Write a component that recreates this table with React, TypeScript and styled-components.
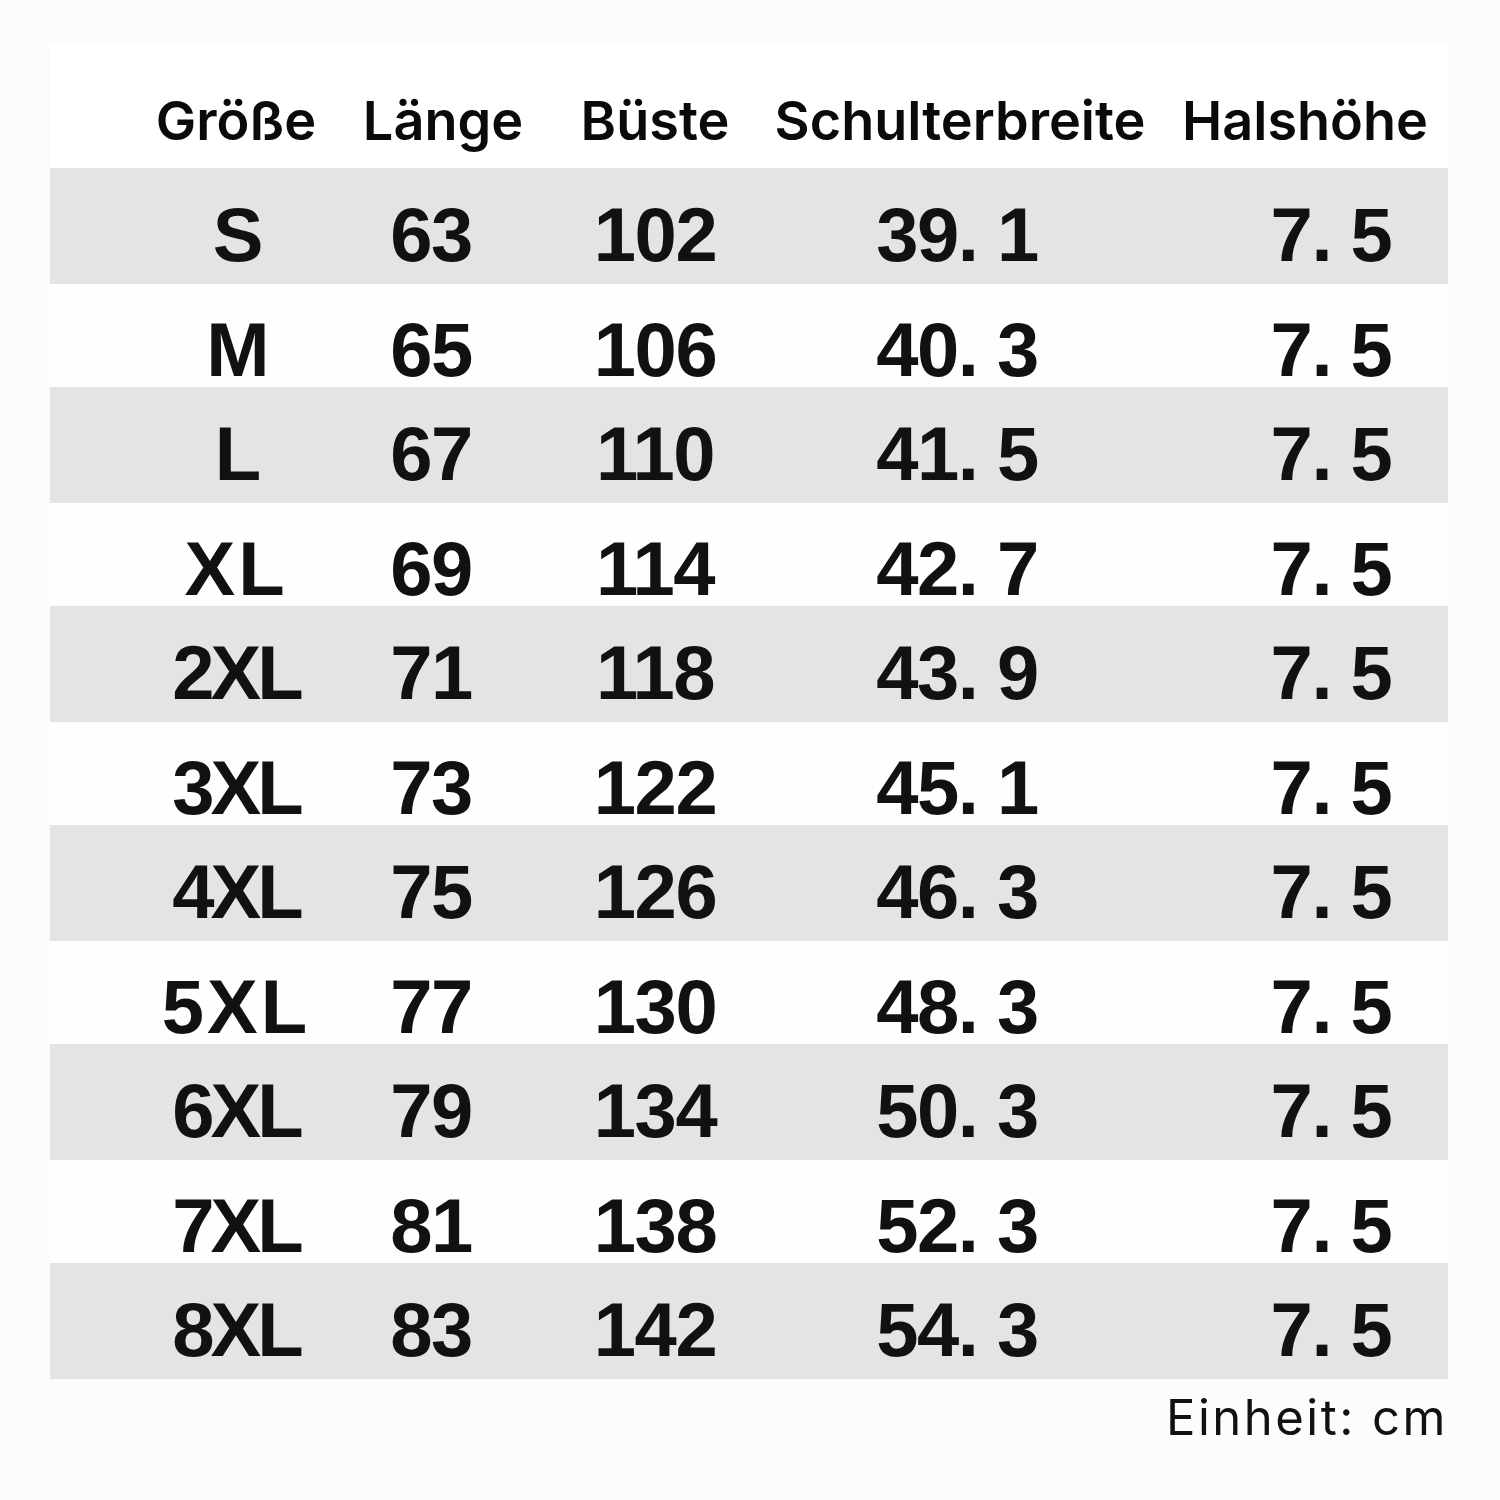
import React from "react"
import styled, { createGlobalStyle } from "styled-components"

const GlobalStyle = createGlobalStyle`
  html, body {
    margin: 0;
    padding: 0;
    background: #fcfcfc;
  }
`

const headers = ["Größe", "Länge", "Büste", "Schulterbreite", "Halshöhe"]

const rows: string[][] = [
  ["S", "63", "102", "39. 1", "7. 5"],
  ["M", "65", "106", "40. 3", "7. 5"],
  ["L", "67", "110", "41. 5", "7. 5"],
  ["XL", "69", "114", "42. 7", "7. 5"],
  ["2XL", "71", "118", "43. 9", "7. 5"],
  ["3XL", "73", "122", "45. 1", "7. 5"],
  ["4XL", "75", "126", "46. 3", "7. 5"],
  ["5XL", "77", "130", "48. 3", "7. 5"],
  ["6XL", "79", "134", "50. 3", "7. 5"],
  ["7XL", "81", "138", "52. 3", "7. 5"],
  ["8XL", "83", "142", "54. 3", "7. 5"],
]

// sizes typed in a wider face in the original sheet
const looseSizes = ["XL", "5XL"]

// horizontal nudge of each column's text from the column centre
const headShift = [0, 2, 0, 0, 11]
const cellShift = [0, -10, 0, -3, 37]

const App: React.FC = () => (
  <>
    <GlobalStyle />
    <Page>
      <Table>
        <HeadRow>
          {headers.map((h, i) => (
            <HeadCell key={h} $shift={headShift[i]}>
              {h}
            </HeadCell>
          ))}
        </HeadRow>
        {rows.map((r, ri) => (
          <Row key={r[0]} $shaded={ri % 2 === 0}>
            {r.map((v, i) => (
              <Cell
                key={i}
                $shift={cellShift[i]}
                $size={i === 0}
                $loose={i === 0 && looseSizes.includes(v)}
              >
                {v}
              </Cell>
            ))}
          </Row>
        ))}
      </Table>
      <Unit>Einheit: cm</Unit>
    </Page>
  </>
)

export default App

const Page = styled.div`
  width: 1500px;
  height: 1500px;
  box-sizing: border-box;
  padding: 45px 52px 0 50px;
  display: flex;
  flex-direction: column;
`

const Table = styled.div`
  display: flex;
  flex-direction: column;
`

const columns = `
  display: grid;
  grid-template-columns: 232px 178px 250px 360px 1fr;
  padding-left: 70px;
  align-items: center;
  justify-items: center;
`

const HeadRow = styled.div`
  ${columns}
  height: 123px;
  background: #ffffff;
  align-items: end;
  box-sizing: border-box;
  padding-bottom: 14px;
`

const HeadCell = styled.div<{ $shift: number }>`
  font-family: Inter, "Liberation Sans", sans-serif;
  font-weight: 600;
  font-size: 54px;
  color: #0a0a0a;
  line-height: 1.2;
  white-space: nowrap;
  padding-left: ${(p) => Math.max(0, p.$shift * 2)}px;
  padding-right: ${(p) => Math.max(0, -p.$shift * 2)}px;
`

const Row = styled.div<{ $shaded: boolean }>`
  ${columns}
  height: ${(p) => (p.$shaded ? 116 : 103)}px;
  background: ${(p) => (p.$shaded ? "#e4e4e2" : "#fefefe")};
  box-sizing: border-box;
  padding-top: ${(p) => (p.$shaded ? 18 : 28)}px;
`

const Cell = styled.div<{ $shift: number; $size: boolean; $loose: boolean }>`
  font-family: "Liberation Sans", Arial, sans-serif;
  font-weight: 700;
  font-size: 76px;
  letter-spacing: ${(p) => (p.$loose ? "3px" : p.$size ? "-4px" : "-1.5px")};
  color: #111111;
  line-height: 1;
  white-space: pre;
  padding-left: ${(p) => Math.max(0, p.$shift * 2)}px;
  padding-right: ${(p) => Math.max(0, -p.$shift * 2)}px;
`

const Unit = styled.div`
  align-self: flex-end;
  margin-top: 10px;
  font-family: Inter, "Liberation Sans", sans-serif;
  font-weight: 400;
  font-size: 49px;
  letter-spacing: 2.5px;
  color: #111111;
  line-height: 1.2;
`
